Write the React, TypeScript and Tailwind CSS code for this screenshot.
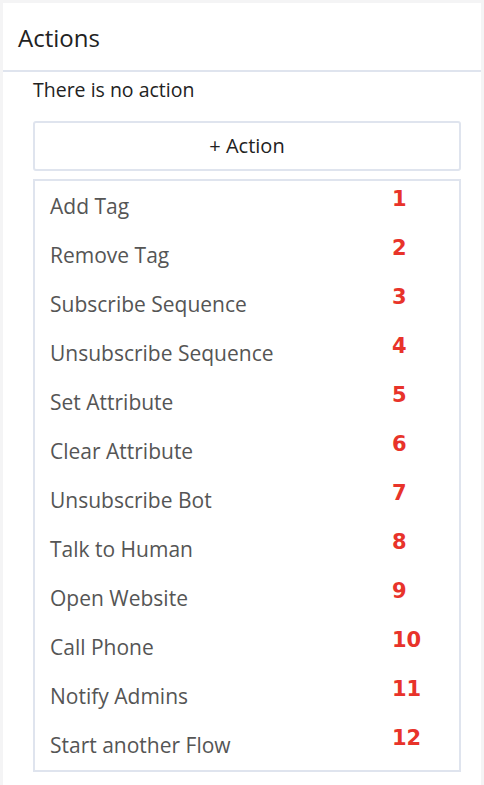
const ITEMS = [
  "Add Tag",
  "Remove Tag",
  "Subscribe Sequence",
  "Unsubscribe Sequence",
  "Set Attribute",
  "Clear Attribute",
  "Unsubscribe Bot",
  "Talk to Human",
  "Open Website",
  "Call Phone",
  "Notify Admins",
  "Start another Flow",
];

export default function App() {
  return (
    <div className="h-[785px] w-[484px] bg-[#f4f4f5] pt-[3px] pl-[3px] pr-[3px] font-['Open_Sans',sans-serif]">
      <div className="h-full bg-white">
        {/* Header */}
        <div className="flex h-[69px] items-center border-b-2 border-[#dfe4ee] pl-[15px] pt-[2px]">
          <h2 className="text-[24px] text-[#222]">Actions</h2>
        </div>

        <div className="pl-[30px] pr-[20px] pt-[4px]">
          <p className="text-[19.5px] leading-[28px] text-[#222]">There is no action</p>

          <button
            type="button"
            className="mt-[17px] flex h-[50px] w-full items-center justify-center rounded-[3px] border-2 border-[#dfe4ee] text-[20px] text-[#222]"
          >
            + Action
          </button>

          <ul className="mt-[8px] border-2 border-[#dfe4ee] pt-[1px]">
            {ITEMS.map((item, i) => (
              <li key={item} className="relative flex h-[49px] items-center pl-[15px] text-[21px] text-[#555]">
                {item}
                <span className="absolute left-[357px] top-[2px] font-['DejaVu_Sans',sans-serif] text-[21px] font-bold text-[#e8332a]">
                  {i + 1}
                </span>
              </li>
            ))}
          </ul>
        </div>
      </div>
    </div>
  );
}
